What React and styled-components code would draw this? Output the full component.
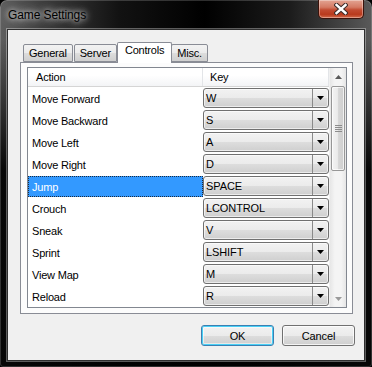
import React from "react";
import styled, { createGlobalStyle } from "styled-components";

const GlobalStyle = createGlobalStyle`
  html, body {
    margin: 0;
    padding: 0;
    background: #000;
  }
  * {
    box-sizing: border-box;
  }
`;

const Window = styled.div`
  width: 372px;
  height: 367px;
  display: flex;
  flex-direction: column;
  padding: 0 7px 6px 7px;
  border-radius: 7px 7px 3px 3px;
  background:
    linear-gradient(180deg, rgba(0, 0, 0, 0) 0, rgba(0, 0, 0, 0) 40px, rgba(0, 0, 0, 0.92) 170px),
    linear-gradient(90deg, #5f5f5f 0%, #3c3c3c 12%, #121212 32%, #000 55%, #1c1c1c 78%, #5a5a5a 100%);
  box-shadow: inset 0 0 0 1px rgba(255, 255, 255, 0.18);
  font-family: "Liberation Sans", Arial, sans-serif;
`;

const TitleBar = styled.div`
  height: 29px;
  display: flex;
  align-items: flex-start;
  justify-content: space-between;
`;

const Title = styled.span`
  margin: 8px 0 0 1px;
  font-size: 12px;
  letter-spacing: -0.1px;
  color: #000;
  text-shadow:
    0 0 5px rgba(255, 255, 255, 0.85),
    0 0 10px rgba(255, 255, 255, 0.6),
    0 0 14px rgba(255, 255, 255, 0.4);
`;

const CloseButton = styled.div`
  width: 46px;
  height: 19px;
  margin-right: 1px;
  display: flex;
  align-items: center;
  justify-content: center;
  border: 1px solid #3b130b;
  border-top: none;
  border-radius: 0 0 5px 5px;
  background: linear-gradient(180deg, #e3a493 0%, #d47a64 40%, #c24b31 55%, #b93a1d 80%, #d26a4a 100%);
  box-shadow: inset 0 0 0 1px rgba(255, 255, 255, 0.35);
`;

const Client = styled.div`
  flex: 1;
  display: flex;
  flex-direction: column;
  padding: 12px 9px 0 12px;
  background: #f0f0f0;
  border: 1px solid #2e2e2e;
  box-shadow: 0 0 0 1px rgba(255, 255, 255, 0.35);
`;

const TabStrip = styled.div`
  height: 20px;
  display: flex;
  align-items: flex-end;
  padding-left: 3px;
  margin-right: 2px;
  position: relative;
  z-index: 1;
`;

const Tab = styled.div`
  height: ${(p) => (p.$active ? "21px" : "18px")};
  margin: ${(p) => (p.$active ? "0 -1px -1px -1px" : "0 1px 0 0")};
  padding: ${(p) => (p.$active ? "1px 7px 0 7px" : "2px 5px 0 5px")};
  font-size: 11px;
  letter-spacing: -0.2px;
  color: #000;
  border: 1px solid #898c95;
  border-bottom: ${(p) => (p.$active ? "none" : "1px solid #898c95")};
  border-radius: 2px 2px 0 0;
  background: ${(p) =>
    p.$active ? "#fff" : "linear-gradient(180deg, #f2f2f2 0%, #ebebeb 50%, #dddddd 51%, #cfcfcf 100%)"};
`;

const TabPanel = styled.div`
  height: 252px;
  margin-right: 2px;
  padding: 4px 5px 5px 6px;
  background: #fcfcfc;
  border: 1px solid #898c95;
`;

const ListView = styled.div`
  height: 241px;
  display: flex;
  border: 1px solid #828790;
  background: #fff;
`;

const ListBody = styled.div`
  flex: 1;
  display: flex;
  flex-direction: column;
`;

const Header = styled.div`
  height: 19px;
  display: flex;
  border-bottom: 1px solid #d5d5d5;
  background: linear-gradient(180deg, #ffffff 0%, #ffffff 40%, #f3f4f6 100%);
`;

const HeaderCell = styled.div`
  width: ${(p) => (p.$width ? `${p.$width}px` : "auto")};
  flex: ${(p) => (p.$width ? "none" : 1)};
  display: flex;
  align-items: center;
  padding-left: ${(p) => p.$pad}px;
  font-size: 11px;
  letter-spacing: -0.2px;
  color: #000;
  border-right: 1px solid #e3e5e8;
`;

const Row = styled.div`
  height: 22px;
  display: flex;
`;

const ActionCell = styled.div`
  width: 175px;
  padding-top: 1px;
`;

const ActionLabel = styled.div`
  height: 21px;
  display: flex;
  align-items: center;
  padding-left: 3px;
  font-size: 11px;
  letter-spacing: -0.2px;
  color: ${(p) => (p.$selected ? "#fff" : "#000")};
  background: ${(p) => (p.$selected ? "#3399ff" : "transparent")};
  border: 1px dotted ${(p) => (p.$selected ? "#1b2b40" : "transparent")};
`;

const KeyCell = styled.div`
  flex: 1;
  padding: 1px 0 1px 0;
`;

const Combo = styled.div`
  height: 20px;
  display: flex;
  border: 1px solid #707070;
  border-radius: 3px;
  background: linear-gradient(180deg, #f2f2f2 0%, #ebebeb 50%, #dddddd 51%, #cfcfcf 100%);
  box-shadow: inset 0 0 0 1px rgba(255, 255, 255, 0.6);
`;

const ComboText = styled.div`
  flex: 1;
  display: flex;
  align-items: center;
  padding-left: 2px;
  font-size: 11px;
  letter-spacing: -0.1px;
  color: #000;
`;

const ComboArrow = styled.div`
  width: 16px;
  display: flex;
  align-items: center;
  justify-content: center;
  border-left: 1px solid #8a8a8a;
`;

const ScrollBar = styled.div`
  width: 17px;
  display: flex;
  flex-direction: column;
  background: linear-gradient(90deg, #e6e6e6 0%, #f4f4f4 30%, #f4f4f4 70%, #e6e6e6 100%);
  border-left: 1px solid #f0f0f0;
`;

const ScrollArrow = styled.div`
  height: 17px;
  display: flex;
  align-items: center;
  justify-content: center;
`;

const ScrollTrack = styled.div`
  flex: 1;
  display: flex;
  flex-direction: column;
  padding: 1px 1px 0 1px;
`;

const Thumb = styled.div`
  height: 85px;
  display: flex;
  align-items: center;
  justify-content: center;
  border: 1px solid #979797;
  border-radius: 2px;
  background: linear-gradient(90deg, #f3f3f3 0%, #ebebeb 45%, #d6d6d6 55%, #cfcfcf 100%);
  box-shadow: inset 0 0 0 1px rgba(255, 255, 255, 0.7);
`;

const ButtonRow = styled.div`
  display: flex;
  justify-content: flex-end;
  gap: 8px;
  margin-top: 11px;
`;

const DialogButton = styled.div`
  width: 73px;
  height: 21px;
  display: flex;
  align-items: center;
  justify-content: center;
  font-size: 11px;
  letter-spacing: -0.1px;
  color: #000;
  border: 1px solid ${(p) => (p.$default ? "#3c7fb1" : "#707070")};
  border-radius: 3px;
  background: linear-gradient(180deg, #f2f2f2 0%, #ebebeb 50%, #dddddd 51%, #cfcfcf 100%);
  box-shadow: ${(p) =>
    p.$default
      ? "inset 0 0 0 1px #48d0f6, inset 0 0 0 2px rgba(255,255,255,0.5)"
      : "inset 0 0 0 1px rgba(255,255,255,0.75)"};
`;

const bindings = [
  ["Move Forward", "W"],
  ["Move Backward", "S"],
  ["Move Left", "A"],
  ["Move Right", "D"],
  ["Jump", "SPACE"],
  ["Crouch", "LCONTROL"],
  ["Sneak", "V"],
  ["Sprint", "LSHIFT"],
  ["View Map", "M"],
  ["Reload", "R"],
];

const tabs = ["General", "Server", "Controls", "Misc."];

function DownTriangle({ color = "#000" }) {
  return (
    <svg width="7" height="4" viewBox="0 0 7 4">
      <path d="M0 0 H7 L3.5 4 Z" fill={color} />
    </svg>
  );
}

function UpTriangle({ color = "#000" }) {
  return (
    <svg width="7" height="4" viewBox="0 0 7 4">
      <path d="M0 4 H7 L3.5 0 Z" fill={color} />
    </svg>
  );
}

function GameSettings() {
  return (
    <Window>
      <TitleBar>
        <Title>Game Settings</Title>
        <CloseButton>
          <svg width="14" height="12" viewBox="0 0 14 12">
            <path d="M2.5 2 L11.5 10 M11.5 2 L2.5 10" stroke="#3a2a28" strokeWidth="4.4" strokeLinecap="square" />
            <path d="M2.5 2 L11.5 10 M11.5 2 L2.5 10" stroke="#fff" strokeWidth="2.4" strokeLinecap="square" />
          </svg>
        </CloseButton>
      </TitleBar>
      <Client>
        <TabStrip>
          {tabs.map((t) => (
            <Tab key={t} $active={t === "Controls"}>
              {t}
            </Tab>
          ))}
        </TabStrip>
        <TabPanel>
          <ListView>
            <ListBody>
              <Header>
                <HeaderCell $width={175} $pad={8}>Action</HeaderCell>
                <HeaderCell $pad={7}>Key</HeaderCell>
              </Header>
              {bindings.map(([action, key]) => (
                <Row key={action}>
                  <ActionCell>
                    <ActionLabel $selected={action === "Jump"}>{action}</ActionLabel>
                  </ActionCell>
                  <KeyCell>
                    <Combo>
                      <ComboText>{key}</ComboText>
                      <ComboArrow>
                        <DownTriangle />
                      </ComboArrow>
                    </Combo>
                  </KeyCell>
                </Row>
              ))}
            </ListBody>
            <ScrollBar>
              <ScrollArrow>
                <UpTriangle color="#5a5a5a" />
              </ScrollArrow>
              <ScrollTrack>
                <Thumb>
                  <svg width="7" height="7" viewBox="0 0 7 7">
                    <path d="M0 0.5 H7 M0 2.5 H7 M0 4.5 H7 M0 6.5 H7" stroke="#8c8c8c" strokeWidth="1" />
                  </svg>
                </Thumb>
              </ScrollTrack>
              <ScrollArrow>
                <DownTriangle color="#9a9a9a" />
              </ScrollArrow>
            </ScrollBar>
          </ListView>
        </TabPanel>
        <ButtonRow>
          <DialogButton $default>OK</DialogButton>
          <DialogButton>Cancel</DialogButton>
        </ButtonRow>
      </Client>
    </Window>
  );
}

export default function App() {
  return (
    <>
      <GlobalStyle />
      <GameSettings />
    </>
  );
}
